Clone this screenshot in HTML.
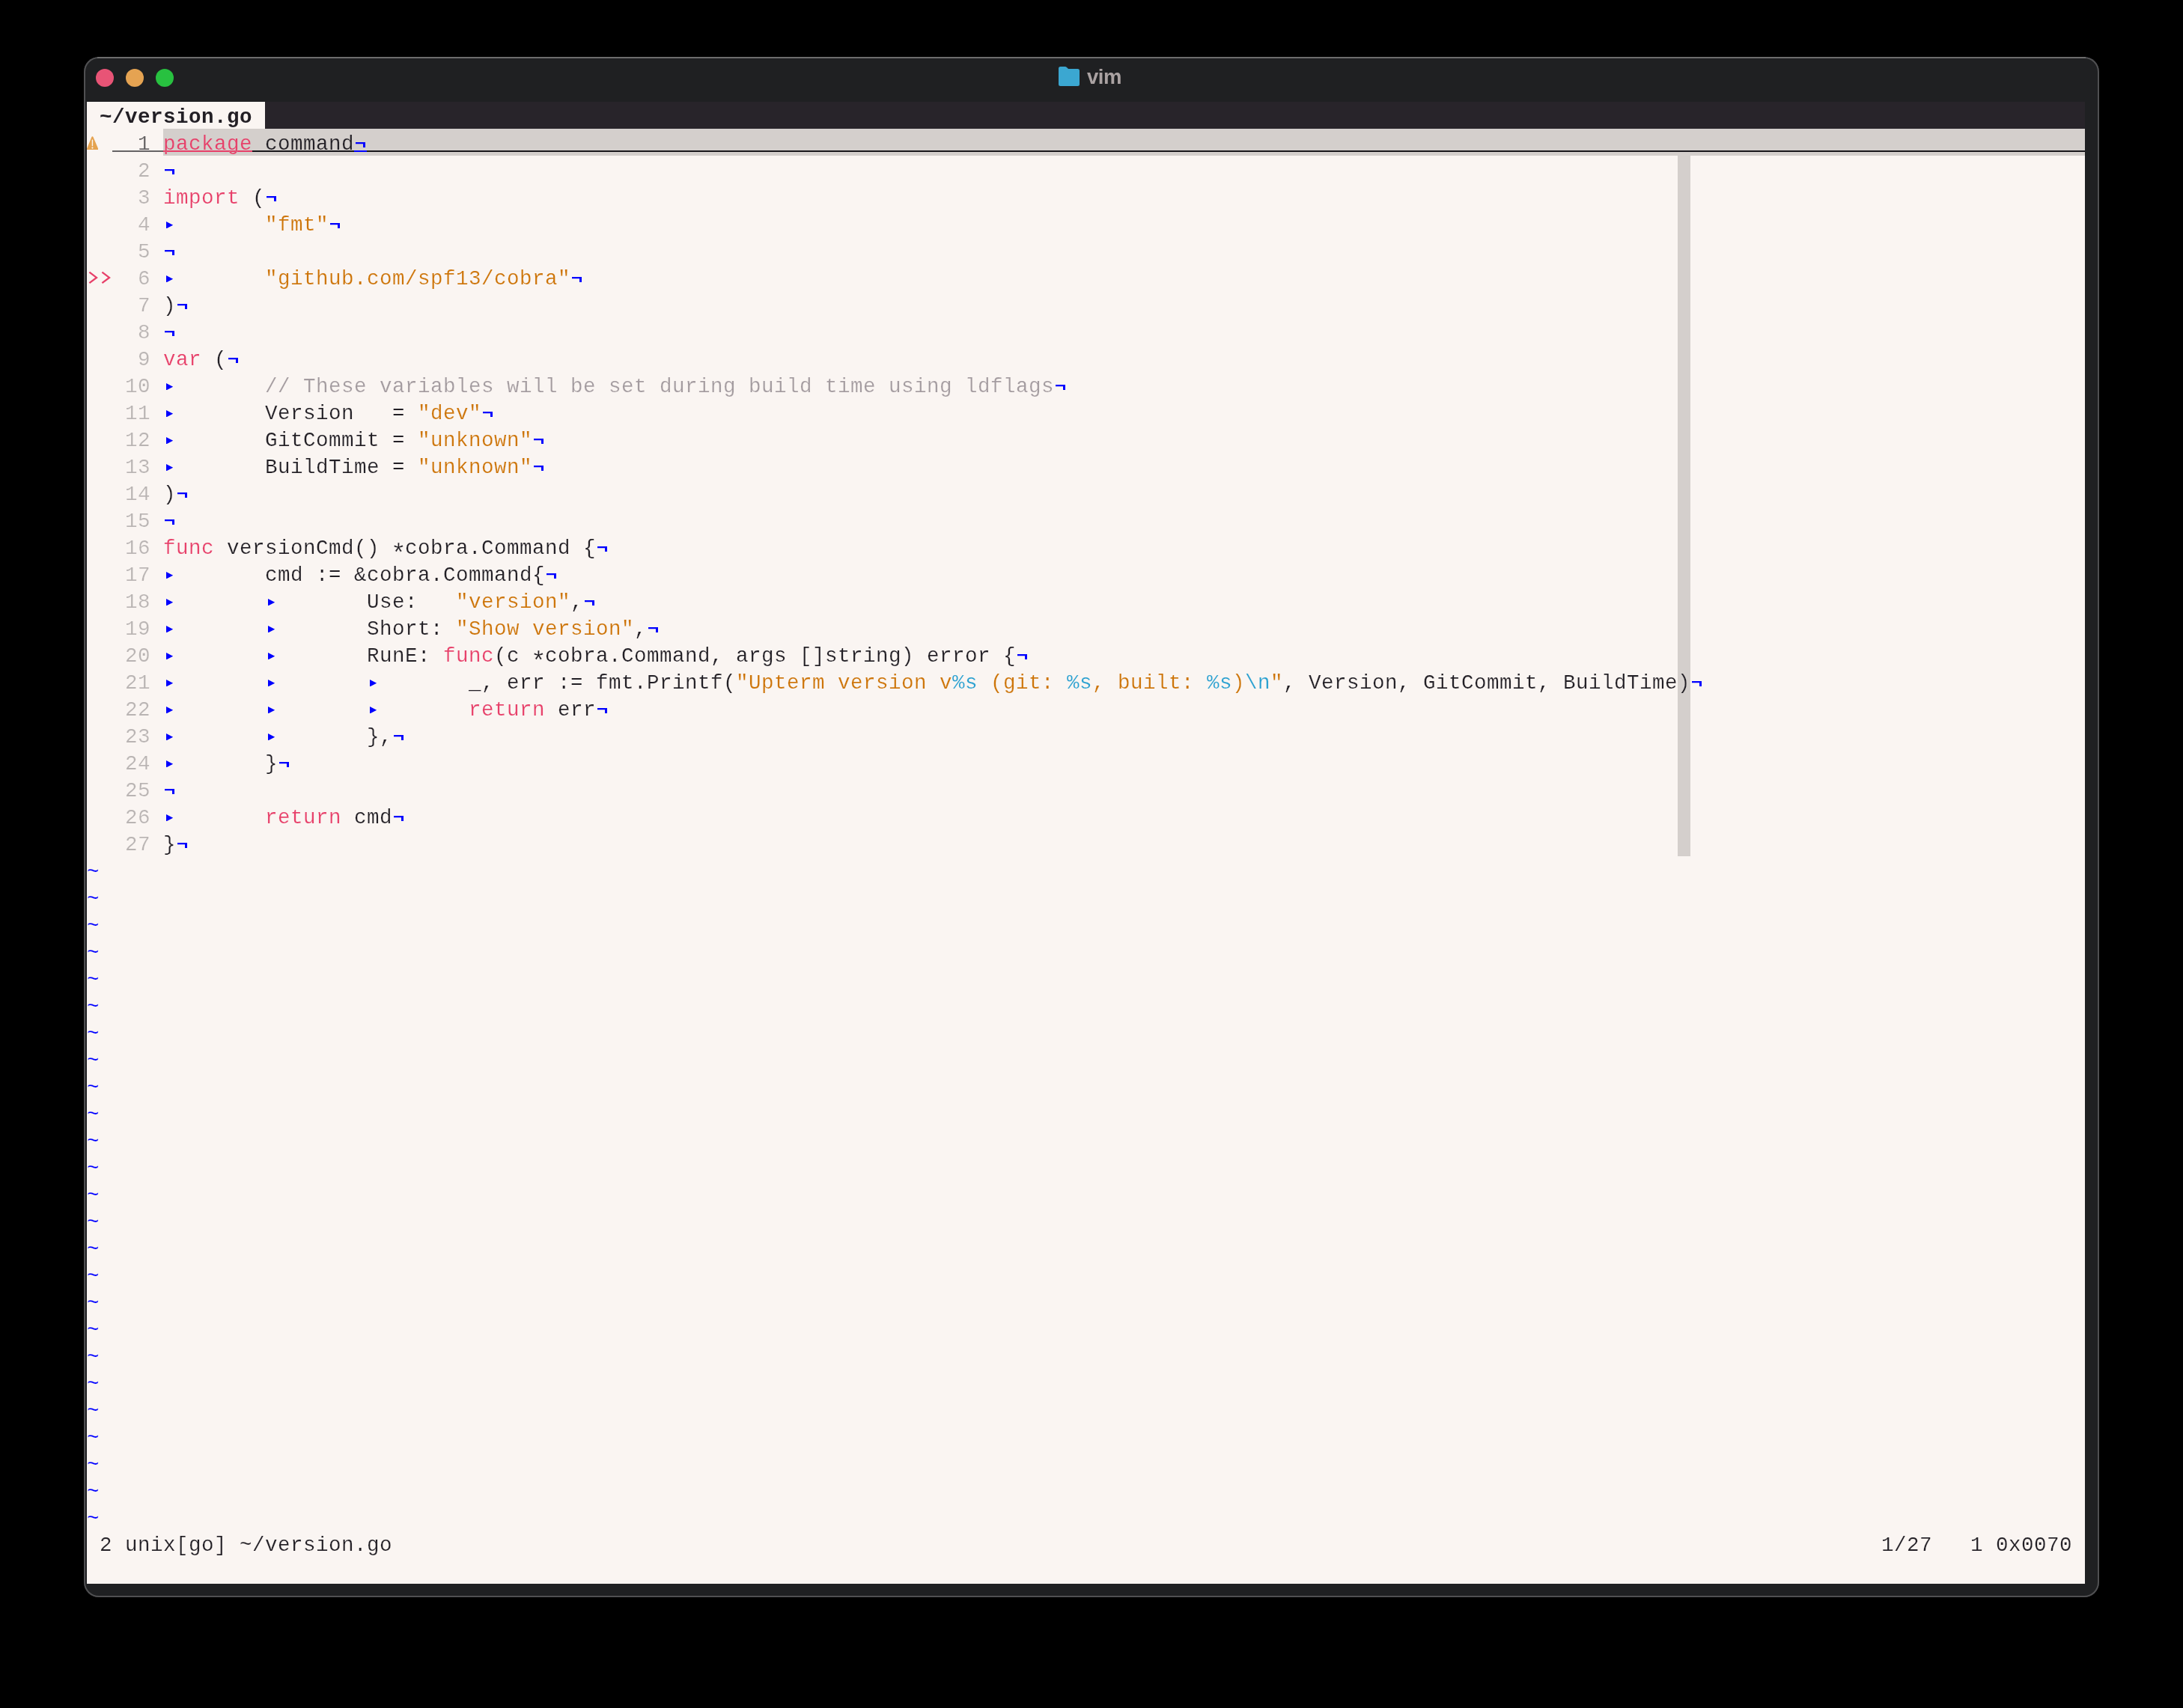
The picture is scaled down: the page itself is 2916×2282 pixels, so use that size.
<!DOCTYPE html>
<html><head><meta charset="utf-8"><title>vim</title>
<style>
html,body{margin:0;padding:0;background:#000;}
body{width:2916px;height:2282px;position:relative;overflow:hidden;font-family:"Liberation Sans",sans-serif;}
#win{position:absolute;left:112px;top:76px;width:2692px;height:2058px;border-radius:20px;background:#1f2022;box-shadow:inset 0 0 0 2px #505052;will-change:transform;}
#win:before{content:"";position:absolute;left:18px;right:18px;top:0;height:2px;background:#6c6c6c;}
.dot{position:absolute;top:16px;width:24px;height:24px;border-radius:50%;}
#title{position:absolute;left:1340px;top:-3px;height:60px;line-height:60px;font-weight:bold;font-size:27.5px;letter-spacing:-0.5px;color:#aaa2a2;white-space:pre;}
#folder{position:absolute;left:1302px;top:13px;}
#term{position:absolute;left:4px;top:60px;width:2669px;height:1980px;background:#faf5f2;color:#221f25;font-family:"Liberation Mono",monospace;font-size:27.5px;letter-spacing:0.4973px;overflow:hidden;-webkit-text-stroke:0.2px #faf5f2;}
#cc{position:absolute;left:2125px;top:72px;width:17px;height:936px;background:#d4cfcc;}
.r{position:relative;height:36px;line-height:41.4px;white-space:pre;}
.r>*{position:relative;}
.tl{background:#28242a;}
.tab{-webkit-text-stroke:0;}
.cl{-webkit-text-stroke-color:#d4cfcc;}
.tab{display:inline-block;height:36px;background:#faf5f2;color:#221f25;font-weight:bold;vertical-align:top;}
.a{display:inline-block;transform:translateY(9px) scale(1.25);}
.k{color:#e73f69;}
.s{color:#cd7408;}
.p{color:#279fd0;}
.c{color:#a39b9f;}
.ln{color:#b9b4b3;}
.nt{color:#0000ff;top:1px;}
.e{color:#e73f69;}
.cn{display:inline-block;height:36px;vertical-align:top;color:#625f61;box-shadow:inset 0 -5px 0 0 #faf5f2, inset 0 -7px 0 0 #666365;}
.cl{display:inline-block;height:36px;width:2567px;vertical-align:top;background:linear-gradient(#d4cfcc 0 29px,#19171b 29px 31px,#d4cfcc 31px 36px);}
.cl .k{display:inline-block;height:36px;vertical-align:top;background:linear-gradient(transparent 0 29px,#e73f69 29px 31px,transparent 31px 36px);}
.cl i.n{background:linear-gradient(transparent 0 29px,#0000ff 29px 31px,transparent 31px 36px);}
i{font-style:normal;display:inline-block;width:17px;height:36px;vertical-align:top;position:relative;}
i.n:before{content:"";position:absolute;left:2px;top:18px;width:13px;height:7px;background:#0000ff;clip-path:polygon(0 0,13px 0,13px 7px,10px 7px,10px 2.3px,0 2.3px);}
i.t:before{content:"";position:absolute;left:4px;top:15.9px;width:9.2px;height:9.5px;background:#0000ff;clip-path:polygon(0 0,100% 50%,0 100%);}
i.e2{width:34px;}
i.e2 svg{position:absolute;left:0;top:0;}
i.w svg{position:absolute;left:0.1px;top:9.8px;}
</style></head>
<body>
<div id="win">
<div class="dot" style="left:16px;background:#e85476"></div>
<div class="dot" style="left:56px;background:#e5a352"></div>
<div class="dot" style="left:96px;background:#28c140"></div>
<svg id="folder" width="28" height="26" viewBox="0 0 28 26"><path d="M2.5 0 H8.5 Q10 0 11 1 L12.5 2.5 Q13.2 3 14.2 3 H25.5 Q28 3 28 5.5 V23.5 Q28 26 25.5 26 H2.5 Q0 26 0 23.5 V2.5 Q0 0 2.5 0 Z" fill="#3ba7d1"/></svg>
<div id="title">vim</div>
<div id="term">
<div id="cc"></div>
<div class="r tl"><span class="tab"> ~/version.go </span></div>
<div class="r"><i class="w"><svg viewBox="0 0 15.2 18.2" width="15.2" height="18.2"><path d="M7.4 0.2 Q8.2 0.2 8.6 1.2 L15 16.3 Q15.6 18.2 13.8 18.2 L1.3 18.2 Q-0.4 18.2 0.2 16.3 L6.3 1.2 Q6.7 0.2 7.4 0.2 Z" fill="#e5a350"/><rect x="6.75" y="4.6" width="1.4" height="8.6" rx="0.5" fill="#faf5f2"/><circle cx="7.45" cy="15.6" r="1.1" fill="#faf5f2"/></svg></i> <span class="cn">  1 </span><span class="cl"><span class="k">package</span> command<i class="n"></i></span></div>
<div class="r">  <span class="ln">  2 </span><i class="n"></i></div>
<div class="r">  <span class="ln">  3 </span><span class="k">import</span> (<i class="n"></i></div>
<div class="r">  <span class="ln">  4 </span><i class="t"></i>       <span class="s">"fmt"</span><i class="n"></i></div>
<div class="r">  <span class="ln">  5 </span><i class="n"></i></div>
<div class="r"><i class="e2"><svg width="34" height="36" viewBox="0 0 34 36"><path d="M3.4 11.7 L13 18.9 L3.4 26.1 M20.4 11.7 L30 18.9 L20.4 26.1" fill="none" stroke="#e73f69" stroke-width="2.3" stroke-linejoin="miter"/></svg></i><span class="ln">  6 </span><i class="t"></i>       <span class="s">"github.com/spf13/cobra"</span><i class="n"></i></div>
<div class="r">  <span class="ln">  7 </span>)<i class="n"></i></div>
<div class="r">  <span class="ln">  8 </span><i class="n"></i></div>
<div class="r">  <span class="ln">  9 </span><span class="k">var</span> (<i class="n"></i></div>
<div class="r">  <span class="ln"> 10 </span><i class="t"></i>       <span class="c">// These variables will be set during build time using ldflags</span><i class="n"></i></div>
<div class="r">  <span class="ln"> 11 </span><i class="t"></i>       Version   = <span class="s">"dev"</span><i class="n"></i></div>
<div class="r">  <span class="ln"> 12 </span><i class="t"></i>       GitCommit = <span class="s">"unknown"</span><i class="n"></i></div>
<div class="r">  <span class="ln"> 13 </span><i class="t"></i>       BuildTime = <span class="s">"unknown"</span><i class="n"></i></div>
<div class="r">  <span class="ln"> 14 </span>)<i class="n"></i></div>
<div class="r">  <span class="ln"> 15 </span><i class="n"></i></div>
<div class="r">  <span class="ln"> 16 </span><span class="k">func</span> versionCmd() <span class="a">*</span>cobra.Command {<i class="n"></i></div>
<div class="r">  <span class="ln"> 17 </span><i class="t"></i>       cmd := &amp;cobra.Command{<i class="n"></i></div>
<div class="r">  <span class="ln"> 18 </span><i class="t"></i>       <i class="t"></i>       Use:   <span class="s">"version"</span>,<i class="n"></i></div>
<div class="r">  <span class="ln"> 19 </span><i class="t"></i>       <i class="t"></i>       Short: <span class="s">"Show version"</span>,<i class="n"></i></div>
<div class="r">  <span class="ln"> 20 </span><i class="t"></i>       <i class="t"></i>       RunE: <span class="k">func</span>(c <span class="a">*</span>cobra.Command, args []string) error {<i class="n"></i></div>
<div class="r">  <span class="ln"> 21 </span><i class="t"></i>       <i class="t"></i>       <i class="t"></i>       _, err := fmt.Printf(<span class="s">"Upterm version v</span><span class="p">%s</span><span class="s"> (git: </span><span class="p">%s</span><span class="s">, built: </span><span class="p">%s</span><span class="s">)</span><span class="p">\n</span><span class="s">"</span>, Version, GitCommit, BuildTime)<i class="n"></i></div>
<div class="r">  <span class="ln"> 22 </span><i class="t"></i>       <i class="t"></i>       <i class="t"></i>       <span class="k">return</span> err<i class="n"></i></div>
<div class="r">  <span class="ln"> 23 </span><i class="t"></i>       <i class="t"></i>       },<i class="n"></i></div>
<div class="r">  <span class="ln"> 24 </span><i class="t"></i>       }<i class="n"></i></div>
<div class="r">  <span class="ln"> 25 </span><i class="n"></i></div>
<div class="r">  <span class="ln"> 26 </span><i class="t"></i>       <span class="k">return</span> cmd<i class="n"></i></div>
<div class="r">  <span class="ln"> 27 </span>}<i class="n"></i></div>
<div class="r"><span class="nt">~</span></div>
<div class="r"><span class="nt">~</span></div>
<div class="r"><span class="nt">~</span></div>
<div class="r"><span class="nt">~</span></div>
<div class="r"><span class="nt">~</span></div>
<div class="r"><span class="nt">~</span></div>
<div class="r"><span class="nt">~</span></div>
<div class="r"><span class="nt">~</span></div>
<div class="r"><span class="nt">~</span></div>
<div class="r"><span class="nt">~</span></div>
<div class="r"><span class="nt">~</span></div>
<div class="r"><span class="nt">~</span></div>
<div class="r"><span class="nt">~</span></div>
<div class="r"><span class="nt">~</span></div>
<div class="r"><span class="nt">~</span></div>
<div class="r"><span class="nt">~</span></div>
<div class="r"><span class="nt">~</span></div>
<div class="r"><span class="nt">~</span></div>
<div class="r"><span class="nt">~</span></div>
<div class="r"><span class="nt">~</span></div>
<div class="r"><span class="nt">~</span></div>
<div class="r"><span class="nt">~</span></div>
<div class="r"><span class="nt">~</span></div>
<div class="r"><span class="nt">~</span></div>
<div class="r"><span class="nt">~</span></div>
<div class="r"> 2 unix[go] ~/version.go                                                                                                                     1/27   1 0x0070 </div>
<div class="r"> </div>
</div>
</div>
</body></html>
